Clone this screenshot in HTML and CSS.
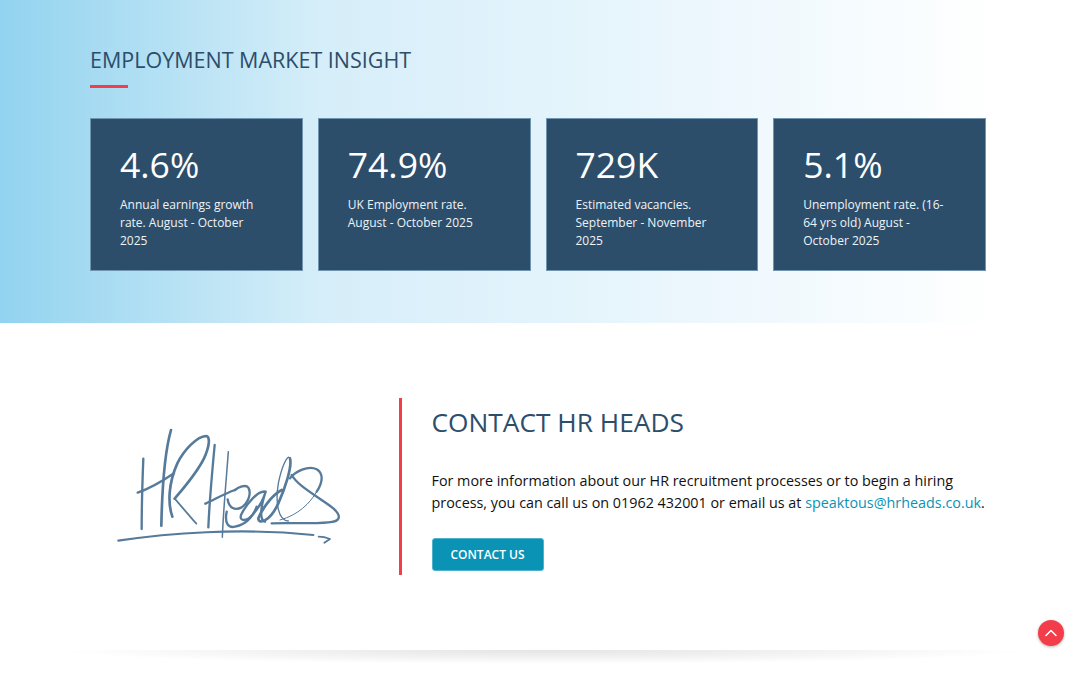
FILE: index.html
```html
<!DOCTYPE html>
<html lang="en">
<head>
<meta charset="utf-8">
<title>Employment Market Insight</title>
<link rel="stylesheet" href="styles.css">
</head>
<body>
<section class="insight">
  <div class="wrap">
    <h2 class="insight-title">EMPLOYMENT MARKET INSIGHT</h2>
    <div class="rule"></div>
    <div class="cards">
      <article class="card"><div class="num">4.6%</div><p class="desc">Annual earnings growth rate. August - October 2025</p></article>
      <article class="card"><div class="num">74.9%</div><p class="desc">UK Employment rate. August - October 2025</p></article>
      <article class="card"><div class="num">729K</div><p class="desc">Estimated vacancies. September - November 2025</p></article>
      <article class="card"><div class="num">5.1%</div><p class="desc">Unemployment rate. (16-64 yrs old) August - October 2025</p></article>
    </div>
  </div>
</section>
<section class="contact">
  <div class="sig-col">
    <svg class="sig" viewBox="0 0 780 450" width="260" height="150" fill="none" stroke="#557a9a" stroke-linecap="round" stroke-linejoin="round" aria-label="HR Heads signature">
      <path d="M130 146C127 220 125 290 125 357" stroke-width="7"/>
      <path d="M213 60C193 130 186 250 184 347" stroke-width="8"/>
      <path d="M113 248C150 236 185 215 222 190" stroke-width="7"/>
      <path d="M217 320C203 280 205 220 232 160C252 120 290 80 318 78C332 80 328 110 312 145C290 190 250 235 224 266" stroke-width="8"/>
      <path d="M224 266C245 290 270 320 289 341" stroke-width="5"/>
      <path d="M344 105C336 190 328 280 325 352" stroke-width="7"/>
      <path d="M385 125C378 220 370 300 367 382" stroke-width="4.5"/>
      <path d="M316 281C345 268 375 250 405 240" stroke-width="7"/>
      <g transform="translate(345 90)">
        <path d="M38 178C42 205 60 212 80 202C100 188 110 160 100 143C92 132 70 142 60 150" stroke-width="7"/>
        <path d="M35 215C28 250 40 265 60 260C85 255 110 240 125 200" stroke-width="7"/>
        <path d="M152 155C130 150 95 190 78 225C72 245 95 245 112 225C130 205 145 180 152 155C140 190 130 240 150 245" stroke-width="7"/>
        <path d="M200 150C170 165 140 210 130 235C130 255 165 245 190 190C210 145 232 80 225 55" stroke-width="8"/>
        <path d="M225 55C218 40 200 80 190 130C180 190 190 240 220 243" stroke-width="4"/>
        <path d="M230 105C250 140 310 170 355 205C382 230 375 245 340 247C290 252 220 248 170 250" stroke-width="7"/>
        <path d="M225 115C240 95 280 75 305 88C325 100 325 125 305 155" stroke-width="7"/>
        <path d="M305 155C285 190 250 225 195 240" stroke-width="3"/>
      </g>
      <path d="M55 392C200 370 420 352 640 375" stroke-width="6.5"/>
      <path d="M656 380C670 380 680 383 690 387L673 398" stroke-width="5.5"/>
    </svg>
  </div>
  <div class="contact-body">
    <h2 class="contact-title">CONTACT HR HEADS</h2>
    <p class="contact-text">For more information about our HR recruitment processes or to begin a hiring process, you can call us on 01962 432001 or email us at <a class="mail" href="#">speaktous@hrheads.co.uk</a>.</p>
    <a class="btn" href="#">CONTACT US</a>
  </div>
</section>
<div class="divider"></div>
<a class="to-top" href="#" aria-label="Back to top">
  <svg viewBox="0 0 26 26" width="26" height="26" fill="none" stroke="#fff" stroke-width="1.6" stroke-linecap="round" stroke-linejoin="round"><path d="M8 15.5L13 10.5L18 15.5"/></svg>
</a>
</body>
</html>
```
FILE: styles.css
```css
* { box-sizing: border-box; }
html, body { margin: 0; padding: 0; }
body {
  font-family: "Open Sans", "Liberation Sans", sans-serif;
  background: #fff;
  color: #111;
  height: 673px;
  overflow: hidden;
  position: relative;
}
.insight {
  height: 323px;
  background: linear-gradient(90deg, #92d3ef 0%, #d6eef9 30%, #ecf7fd 65%, #fff 93%);
  padding: 43px 0 0 90px;
}
.wrap { width: 896px; }
.insight-title {
  margin: 0;
  font-size: 21.5px;
  line-height: 33px;
  font-weight: 400;
  color: #2d4e6b;
}
.rule {
  width: 38px;
  height: 3px;
  margin-top: 9px;
  background: #f43d4a;
}
.cards {
  display: grid;
  grid-template-columns: repeat(4, 1fr);
  gap: 15px;
  margin-top: 30px;
}
.card {
  height: 153px;
  background: #2d4e6b;
  border: 1px solid #6f95b0;
  padding: 21px 35px 0 29px;
  color: #fff;
}
.num {
  font-size: 35.5px;
  line-height: 48px;
}
.desc {
  margin: 8px 0 0;
  font-size: 12px;
  line-height: 18px;
  color: #eef3f7;
}
.contact {
  display: flex;
  margin: 75px 0 0 90px;
  height: 177px;
}
.sig-col {
  width: 309px;
  padding: 12px 0 0 10px;
}
.sig { display: block; filter: blur(0.3px); }
.contact-body {
  width: 587px;
  border-left: 3px solid #f43d4a;
  padding-left: 29.5px;
}
.contact-title {
  margin: 6px 0 0;
  font-size: 26.3px;
  line-height: 36px;
  font-weight: 400;
  color: #2d4e6b;
}
.contact-text {
  margin: 30px 0 0;
  font-size: 14.35px;
  line-height: 21.5px;
  color: #111;
}
.mail { color: #0a93b5; text-decoration: none; }
.btn {
  display: flex;
  align-items: center;
  justify-content: center;
  width: 112px;
  height: 33px;
  margin-top: 25px;
  background: #0a93b5;
  border: 1px solid #4db3cc;
  border-radius: 3px;
  color: #fff;
  font-size: 12px;
  font-weight: 600;
  text-decoration: none;
}
.divider {
  margin: 75px 0 0 60px;
  width: 966px;
  height: 14px;
  background: radial-gradient(ellipse 50% 100% at 50% 0, #e4e4e4 0%, #f2f2f2 55%, #fff 100%);
}
.to-top {
  position: absolute;
  left: 1038px;
  top: 620px;
  width: 26px;
  height: 26px;
  border-radius: 50%;
  background: #f43d4a;
  box-shadow: 0 1px 3px rgba(0,0,0,.3);
  display: block;
}
.to-top svg { display: block; }
```
